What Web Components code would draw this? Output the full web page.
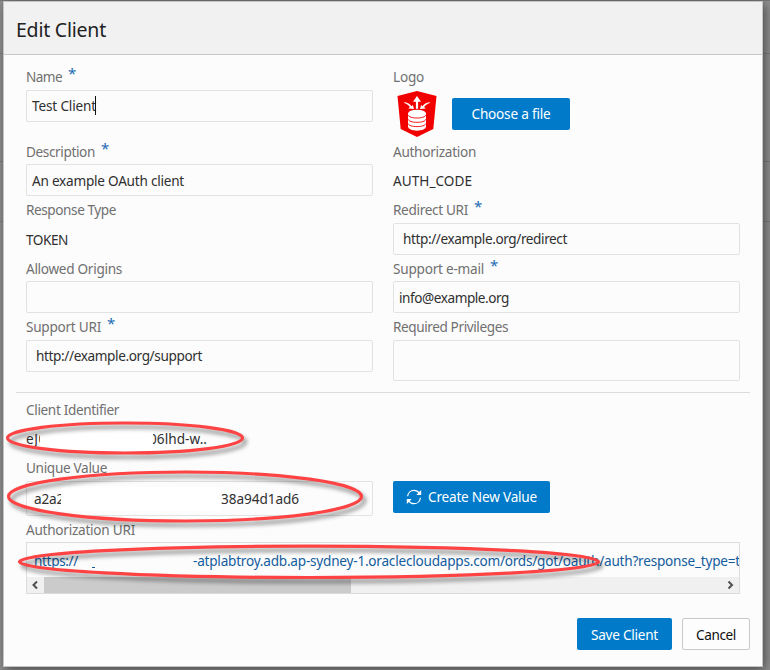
<!DOCTYPE html>
<html lang="en"><head><meta charset="utf-8"><title>Edit Client</title>
<style>
html,body{margin:0;height:100%;overflow:hidden}
body{font:13.6px/20px "Noto Sans","Open Sans",sans-serif;color:#303030;background:#8e8e8e}
</style></head><body>
<client-page></client-page>
<script>
function define(name, html, after) {
  const t = document.createElement('template');
  t.innerHTML = html;
  customElements.define(name, class extends HTMLElement {
    connectedCallback() {
      if (this.shadowRoot) return;
      this.attachShadow({mode: 'open'}).append(t.content.cloneNode(true));
      if (after) after(this, this.shadowRoot);
    }
  });
}

/* Text run whose tracking is adjusted so that it occupies the width in "w". */
define('fit-text', `<style>:host{display:inline-block;flex:none;white-space:pre;line-height:20px}span{display:inline-block}</style><span><slot></slot></span>`,
  (el, root) => {
    const w = parseFloat(el.getAttribute('w')), span = root.querySelector('span');
    const n = el.textContent.length;
    const natural = span.getBoundingClientRect().width;
    span.style.letterSpacing = (w - natural) / n + 'px';
  });

define('form-field', `<style>
:host{display:block;min-width:0}
.label{display:flex;height:20px;color:#707070;white-space:nowrap}
.star{display:none;color:#1b6db5;font-size:15px;margin:-4px 0 0 6px;line-height:20px}
:host([required]) .star{display:block}
.body{margin-top:var(--gap,3px)}
</style><div class="label"><slot name="label"></slot><span class="star">*</span></div><div class="body"><slot></slot></div>`);

define('text-box', `<style>
:host{display:flex;align-items:center;box-sizing:border-box;height:var(--h,32px);border:1px solid #e2e2e2;border-radius:2px;background:#fcfcfc;padding-left:var(--pad,5px);padding-top:var(--drop,0);white-space:nowrap;overflow:hidden}
.caret{display:none;width:1px;height:19px;background:#111;margin:-1px 0 0 -1px}
:host([focused]) .caret{display:block}
</style><slot></slot><i class="caret"></i>`);

define('static-value', `<style>:host{display:flex;height:20px;padding-top:var(--top,7px);white-space:nowrap}</style><slot></slot>`);

define('masked-gap', `<style>:host{display:block;flex:none;height:24px;background:#fff}</style>`,
  el => { el.style.width = el.getAttribute('w') + 'px'; });

define('clip-text', `<style>:host{display:flex;flex:none;overflow:hidden;white-space:nowrap}:host([end]){justify-content:flex-end}</style><slot></slot>`,
  el => { el.style.width = el.getAttribute('w') + 'px'; });

define('action-button', `<style>
:host{display:flex;align-items:center;justify-content:center;gap:6px;box-sizing:border-box;height:32px;padding-top:1px;background:#007ac9;color:#fff;border-radius:2px;white-space:nowrap}
:host([plain]){background:#fdfdfd;color:#111;border:1px solid #c9c9c9}
</style><slot name="icon"></slot><slot></slot>`);

define('refresh-icon', `<style>:host{display:block;width:16px;height:16px}svg{display:block}</style>
<svg width="16" height="16" viewBox="0 0 16 16" fill="none" stroke="#fff" stroke-width="1.2">
<path d="M1.7 7.3V6.8C2.1 3.6 4.8 1.3 8 1.3c2.2 0 4.2 1.1 5.3 2.8"/><path d="M14.3 8.7v.5c-.4 3.200-3.100 5.500-6.300 5.500-2.200 0-4.200-1.100-5.300-2.800"/>
<path fill="#fff" stroke="none" d="M15.200 1v5H10.300zM.8 15v-5h4.900z"/></svg>`);

define('shield-logo', `<style>:host{display:block;width:40px;height:46px}svg{display:block}</style>
<svg width="40" height="46" viewBox="0 0 40 46">
<path fill="#f20000" d="M20 0 39.500 5 36.300 38 20 46 3.700 38 .5 5z"/>
<g fill="#fff"><ellipse cx="20" cy="22.500" rx="9" ry="3.800"/><path d="M11 22.500h18v13c0 2.300-4 4.200-9 4.200s-9-1.900-9-4.200z"/>
<path d="M20 5 24 10.800h-2.900v7h-2.200v-7H16z"/><path d="m17 18-5.700-.6 1.600-1.300c-1.300-2-3-3.300-5.600-4.200v-1c3.600.7 5.800 2.200 7.200 4.300l1.400-1.300z"/><path d="m23 18 5.700-.6-1.600-1.300c1.300-2 3-3.300 5.600-4.200v-1c-3.600.7-5.800 2.200-7.200 4.300l-1.400-1.300z"/></g>
<g fill="none" stroke="#f20000" stroke-width=".9"><path d="M11 24c1 1.900 4 3 9 3s8-1.100 9-3M11 28.300c1 1.900 4 3 9 3s8-1.100 9-3M11 32.600c1 1.900 4 3 9 3s8-1.100 9-3"/></g></svg>`);

define('scroll-box', `<style>
:host{display:flex;flex-direction:column;box-sizing:border-box;height:52px;border:1px solid #d9dde1;background:#fcfcfc;overflow:hidden}
.text{display:flex;align-items:center;box-sizing:border-box;height:34px;padding:1px 0 0 7px;white-space:nowrap;color:#145c9e;overflow:hidden}
.bar{display:flex;align-items:center;height:16px;background:#f0f0f0}
.thumb{width:307px;height:16px;background:#cbcbcb}
svg{width:17px;height:16px;fill:none;stroke:#505050;stroke-width:2}
.bar svg:last-child{margin-left:auto}
</style><div class="text"><slot></slot></div>
<div class="bar"><svg viewBox="0 0 17 16"><path d="M10 4.500 6.500 8l3.500 3.500"/></svg><div class="thumb"></div><svg viewBox="0 0 17 16"><path d="m6.500 4.500 3.500 3.500-3.500 3.500"/></svg></div>`);

define('hand-marks', `<style>:host{position:absolute;left:0;top:0;width:770px;height:670px;pointer-events:none}svg{display:block;filter:drop-shadow(3px 4px 2px rgba(0,0,0,.45))}</style>
<svg width="770" height="670" fill="none" stroke="#fd4343" stroke-width="3.200"><ellipse cx="125" cy="438" rx="117.500" ry="15"/><ellipse cx="185" cy="496.500" rx="176.500" ry="24.500"/><ellipse cx="309" cy="561.800" rx="289.500" ry="15.700"/></svg>`);

define('modal-dialog', `<style>
:host{display:flex;flex-direction:column;box-sizing:border-box;width:760px;height:666px;background:#fcfcfc;border:1px solid #c4c4c4;box-shadow:2px 3px 10px rgba(0,0,0,.48)}
header{box-sizing:border-box;height:53px;background:#f1f1f1;border-bottom:1px solid #c8c8c8;padding:4px 12px 0;display:flex;align-items:center;font-size:19.500px;color:#222}
main{flex:1;padding:12px 22px 0}
footer{display:flex;justify-content:flex-end;gap:10px;padding:0 12px 16px}
</style><header><slot name="title"></slot></header><main><slot></slot></main><footer><slot name="actions"></slot></footer>`);

define('client-page', `<style>
:host{display:block;box-sizing:border-box;width:770px;height:670px;padding:1px 0 0 3px;overflow:hidden;background:linear-gradient(#777 0 1px,transparent 1px 53px,#7d7d7d 53px 54px,transparent 54px 161px,#7d7d7d 161px 162px,transparent 162px 221px,#7d7d7d 221px 222px,transparent 222px),#8f8f8f}
.grid{display:grid;grid-template-columns:347px 347px;column-gap:20px}
.top{grid-template-rows:75px 58px 59px 58px 75px}
.bottom{grid-template-rows:58px 62px 74px;padding-top:7px}
.rule{height:1px;margin:0 -10px;background:#d9dcdf}
.tight{--gap:2px}
.wide{grid-column:1/3}
.logo{display:flex;gap:15px;padding-left:4px;margin-top:1px}
.logo shield-logo{margin-top:1px}
.logo action-button{width:118px;margin-top:8px;padding-top:0}
.speck{flex:none;align-self:flex-end;width:3px;height:1px;margin:0 98px 9px 14px;background:#145c9e}
</style>
<modal-dialog>
<fit-text slot="title" w="90">Edit Client</fit-text>
<div class="grid top">
<form-field required><fit-text slot="label" w="36">Name</fit-text><text-box focused><fit-text w="64">Test Client</fit-text></text-box></form-field>
<form-field><fit-text slot="label" w="31">Logo</fit-text><div class="logo"><shield-logo></shield-logo><action-button><fit-text w="79">Choose a file</fit-text></action-button></div></form-field>
<form-field class="tight" required><fit-text slot="label" w="69">Description</fit-text><text-box style="--drop:2px"><fit-text w="152">An example OAuth client</fit-text></text-box></form-field>
<form-field class="tight"><fit-text slot="label" w="83">Authorization</fit-text><static-value><fit-text w="79">AUTH_CODE</fit-text></static-value></form-field>
<form-field><fit-text slot="label" w="90">Response Type</fit-text><static-value><fit-text w="42">TOKEN</fit-text></static-value></form-field>
<form-field required><fit-text slot="label" w="75">Redirect URI</fit-text><text-box style="--pad:9px"><fit-text w="164">http://example.org/redirect</fit-text></text-box></form-field>
<form-field class="tight"><fit-text slot="label" w="96">Allowed Origins</fit-text><text-box></text-box></form-field>
<form-field class="tight" required><fit-text slot="label" w="91">Support e-mail</fit-text><text-box style="--drop:2px"><fit-text w="110">info@example.org</fit-text></text-box></form-field>
<form-field required><fit-text slot="label" w="75">Support URI</fit-text><text-box style="--pad:9px"><fit-text w="166">http://example.org/support</fit-text></text-box></form-field>
<form-field><fit-text slot="label" w="115">Required Privileges</fit-text><text-box style="--h:41px"></text-box></form-field>
</div>
<div class="rule"></div>
<div class="grid bottom">
<form-field class="wide" style="--gap:0px"><fit-text slot="label" w="93">Client Identifier</fit-text><static-value style="--top:9px"><clip-text w="14"><fit-text w="21">eJ0</fit-text></clip-text><masked-gap w="113"></masked-gap><clip-text w="54" end><fit-text w="58">06lhd-w..</fit-text></clip-text></static-value></form-field>
<form-field><fit-text slot="label" w="81">Unique Value</fit-text><text-box style="--h:35px;--pad:7px"><clip-text w="27"><fit-text w="30">a2a2</fit-text></clip-text><masked-gap w="160"></masked-gap><fit-text w="78">38a94d1ad6</fit-text></text-box></form-field>
<form-field><action-button style="width:157px;padding-top:0"><refresh-icon slot="icon"></refresh-icon><fit-text w="109">Create New Value</fit-text></action-button></form-field>
<form-field class="wide tight"><fit-text slot="label" w="109">Authorization URI</fit-text><scroll-box><fit-text w="44">https://</fit-text><i class="speck"></i><fit-text w="547">-atplabtroy.adb.ap-sydney-1.oraclecloudapps.com/ords/got/oauth/auth?response_type=t</fit-text></scroll-box></form-field>
</div>
<action-button slot="actions" style="width:95px"><fit-text w="67">Save Client</fit-text></action-button>
<action-button slot="actions" plain style="width:68px"><fit-text w="40">Cancel</fit-text></action-button>
</modal-dialog>
<hand-marks></hand-marks>`);
</script></body></html>
